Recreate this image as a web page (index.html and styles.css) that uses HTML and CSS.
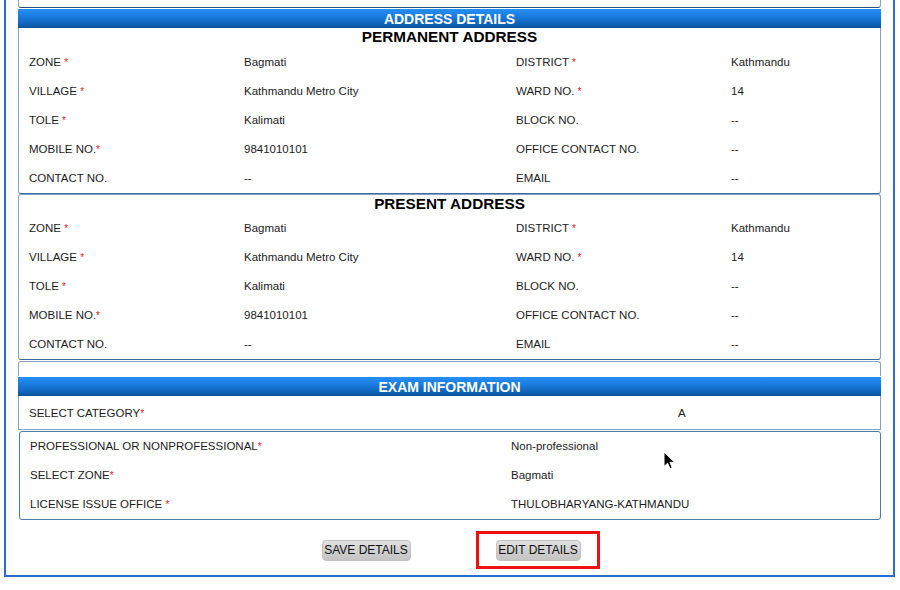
FILE: index.html
```html
<!DOCTYPE html>
<html>
<head>
<meta charset="utf-8">
<link rel="stylesheet" href="styles.css">
</head>
<body>
<div class="page">
  <div class="prev-box"></div>
  <div class="bar">ADDRESS DETAILS</div>
  <div class="box addr first">
    <div class="title">PERMANENT ADDRESS</div>
    <div class="grid4">
      <div>ZONE <span class="req">*</span></div><div>Bagmati</div><div>DISTRICT <span class="req">*</span></div><div>Kathmandu</div>
      <div>VILLAGE <span class="req">*</span></div><div>Kathmandu Metro City</div><div>WARD NO. <span class="req">*</span></div><div>14</div>
      <div>TOLE <span class="req">*</span></div><div>Kalimati</div><div>BLOCK NO.</div><div>--</div>
      <div>MOBILE NO.<span class="req">*</span></div><div>9841010101</div><div>OFFICE CONTACT NO.</div><div>--</div>
      <div>CONTACT NO.</div><div>--</div><div>EMAIL</div><div>--</div>
    </div>
  </div>
  <div class="box addr second">
    <div class="title">PRESENT ADDRESS</div>
    <div class="grid4">
      <div>ZONE <span class="req">*</span></div><div>Bagmati</div><div>DISTRICT <span class="req">*</span></div><div>Kathmandu</div>
      <div>VILLAGE <span class="req">*</span></div><div>Kathmandu Metro City</div><div>WARD NO. <span class="req">*</span></div><div>14</div>
      <div>TOLE <span class="req">*</span></div><div>Kalimati</div><div>BLOCK NO.</div><div>--</div>
      <div>MOBILE NO.<span class="req">*</span></div><div>9841010101</div><div>OFFICE CONTACT NO.</div><div>--</div>
      <div>CONTACT NO.</div><div>--</div><div>EMAIL</div><div>--</div>
    </div>
  </div>
  <div class="box empty"></div>
  <div class="bar">EXAM INFORMATION</div>
  <div class="box cat">
    <div>SELECT CATEGORY<span class="req">*</span></div><div>A</div>
  </div>
  <div class="box exam">
    <div>PROFESSIONAL OR NONPROFESSIONAL<span class="req">*</span></div><div>Non-professional</div>
    <div>SELECT ZONE<span class="req">*</span></div><div>Bagmati</div>
    <div>LICENSE ISSUE OFFICE <span class="req">*</span></div><div>THULOBHARYANG-KATHMANDU</div>
  </div>
  <div class="actions">
    <button class="btn">SAVE DETAILS</button>
    <div class="highlight"><button class="btn">EDIT DETAILS</button></div>
  </div>
</div>
<svg class="cursor" width="13" height="19" viewBox="0 0 13 19"><path d="M1 1 L1 15.5 L4.6 12.2 L7 17.6 L9.2 16.6 L6.9 11.3 L11.6 11.3 Z" fill="#000" stroke="#fff" stroke-width="1" stroke-linejoin="round"/></svg>
</body>
</html>
```
FILE: styles.css
```css
html, body { margin: 0; padding: 0; background: #fff; }
body {
  font-family: "Liberation Sans", Arial, sans-serif;
  color: #1c1c1c;
  font-size: 11.5px;
  position: relative;
  width: 900px;
  height: 590px;
  overflow: hidden;
}
.page {
  margin-left: 4px;
  width: 863px;
  padding: 0 12px;
  border: 2px solid #2c6bd0;
  border-top: none;
}
.prev-box {
  height: 7px;
  border: 1px solid #8aa6c6;
  border-top: none;
  border-bottom-color: #1f4f85;
  border-radius: 0 0 3px 3px;
}
.bar {
  margin-top: 1px;
  height: 19px;
  line-height: 21px;
  text-align: center;
  color: #fff;
  font-weight: bold;
  font-size: 14px;
  background: linear-gradient(#2690f4 0%, #1878dc 45%, #0f5fae 85%, #0d5497 100%);
}
.box {
  border: 1px solid #86a3c6;
  border-bottom-color: #3a6a9f;
  border-radius: 0 0 3px 3px;
}
.addr.first { border-top: none; }
.addr.first .grid4 { padding-top: 1px; }
.addr.second { margin-top: 0; border-radius: 3px; }
.title {
  height: 19px;
  line-height: 17px;
  text-align: center;
  font-weight: bold;
  font-size: 15.3px;
  color: #000;
}
.grid4 {
  display: grid;
  grid-template-columns: 215px 272px 215px 1fr;
  padding-left: 10px;
  line-height: 29px;
}
.req { color: #e8141a; font-size: 10px; }
.empty {
  margin-top: 1px;
  height: 14px;
  border-radius: 3px 3px 0 0;
  border-bottom: none;
}
.cat {
  border-top: none;
  height: 33px;
  display: grid;
  grid-template-columns: 649px 1fr;
  padding-left: 10px;
  align-items: center;
  border-bottom-color: #86a3c6;
  border-radius: 0;
}
.exam {
  margin: 1px 0 0 1px;
  border-radius: 3px;
  border-color: #4d7aa8;
  display: grid;
  grid-template-columns: 481px 1fr;
  padding-left: 10px;
  line-height: 29px;
}
.actions {
  display: flex;
  justify-content: center;
  align-items: center;
  gap: 65px;
  padding: 11px 0 6px 22px;
}
.btn {
  font-family: "Liberation Sans", Arial, sans-serif;
  font-size: 12px;
  color: #111;
  height: 21px;
  padding: 0 1px 1px;
  border: 1px solid #c2c2c2;
  border-radius: 4px;
  background: linear-gradient(#e2e2e2, #cdcdcd 60%, #c4c4c4);
}
.highlight {
  border: 3px solid #ee1111;
  padding: 6px 16px 5px 17px;
  display: flex;
}
.highlight .btn { width: 85px; }
.actions > .btn { width: 89px; }
.cursor {
  position: absolute;
  left: 663px;
  top: 451px;
}
```
